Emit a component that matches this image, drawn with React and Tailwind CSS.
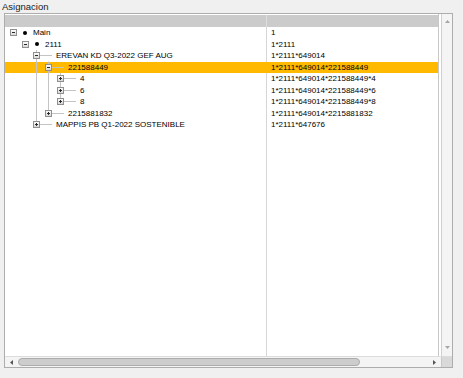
import React from 'react';

const rows = [
  { t: 'Main', lvl: 0, open: true, bullet: true, v: '1' },
  { t: '2111', lvl: 1, open: true, bullet: true, v: '1*2111' },
  { t: 'EREVAN KD Q3-2022 GEF AUG', lvl: 2, open: true, v: '1*2111*649014' },
  { t: '221588449', lvl: 3, open: true, v: '1*2111*649014*221588449', sel: true },
  { t: '4', lvl: 4, open: false, v: '1*2111*649014*221588449*4' },
  { t: '6', lvl: 4, open: false, v: '1*2111*649014*221588449*6' },
  { t: '8', lvl: 4, open: false, v: '1*2111*649014*221588449*8' },
  { t: '2215881832', lvl: 3, open: false, v: '1*2111*649014*2215881832' },
  { t: 'MAPPIS PB Q1-2022 SOSTENIBLE', lvl: 2, open: false, v: '1*2111*647676' },
];

const pad = ['pl-[5px]', 'pl-[17px]', 'pl-[28px]', 'pl-[40px]', 'pl-[52px]'];

function Expander({ open }) {
  return (
    <svg width="7" height="7" viewBox="0 0 7 7" className="relative z-10 shrink-0">
      <defs>
        <linearGradient id="eg" x1="0" y1="0" x2="0" y2="1">
          <stop offset="0" stopColor="#ffffff" />
          <stop offset="1" stopColor="#d6d6d6" />
        </linearGradient>
      </defs>
      <rect x="0.5" y="0.5" width="6" height="6" fill="url(#eg)" stroke="#8f8f8f" strokeWidth="1" />
      <line x1="2" y1="3.5" x2="5" y2="3.5" stroke="#2a2a2a" strokeWidth="1" />
      {!open && <line x1="3.5" y1="2" x2="3.5" y2="5" stroke="#2a2a2a" strokeWidth="1" />}
    </svg>
  );
}

export default function App() {
  return (
    <div
      className="w-[463px] h-[378px] bg-[#f0f0f0] flex flex-col text-black"
      style={{ fontFamily: '"Liberation Sans", Arial, sans-serif' }}
    >
      <div className="h-[13px] pl-[2px] text-[9.5px] leading-[13px] text-[#1a1a1a]">Asignacion</div>
      <div className="ml-[4px] w-[449px] h-[355px] border border-[#adadad] bg-white flex flex-col">
        <div className="flex flex-1 min-h-0">
          <div className="w-[433px] flex flex-col">
            <div className="mt-[1px] h-[12px] bg-[#cbcbcb] flex">
              <div className="w-[262px] border-r border-[#dedede]" />
              <div className="flex-1" />
            </div>
            <div className="relative flex-1 flex flex-col text-[8px] leading-[11.5px]">
              <svg className="absolute top-0 left-0" width="262" height="110">
                <line x1="31.5" y1="23" x2="31.5" y2="98" stroke="#c4c4c4" strokeWidth="1" />
                <line x1="43.5" y1="34.5" x2="43.5" y2="86.5" stroke="#c4c4c4" strokeWidth="1" />
                <line x1="55.5" y1="46" x2="55.5" y2="75" stroke="#c4c4c4" strokeWidth="1" />
              </svg>
              {rows.map((r, i) => (
                <div key={i} className={`flex h-[11.5px] ${r.sel ? 'bg-[#ffba00]' : ''}`}>
                  <div
                    className={`w-[262px] shrink-0 flex items-center border-r ${r.sel ? 'border-transparent' : 'border-[#d6d6d6]'} ${pad[r.lvl]}`}
                  >
                    <Expander open={r.open} />
                    <div className="w-[16px] h-full flex items-center shrink-0">
                      {r.bullet ? (
                        <div className="ml-[6px] w-[4px] h-[4px] rounded-full bg-black" />
                      ) : (
                        <div className="w-[12px] h-px bg-[#c4c4c4]" />
                      )}
                    </div>
                    <span className="whitespace-nowrap">{r.t}</span>
                  </div>
                  <div className="flex-1 pl-[4px] whitespace-nowrap">{r.v}</div>
                </div>
              ))}
              <div className="flex-1 flex">
                <div className="w-[262px] border-r border-[#d6d6d6]" />
                <div className="flex-1" />
              </div>
            </div>
          </div>
          <div className="w-px bg-[#c8c8c8]" />
          <div className="w-[2px] bg-white" />
          <div className="w-[11px] bg-[#f4f4f4] border-l border-[#d0d0d0] flex flex-col items-center justify-between pt-[6px] pb-[7px]">
            <svg width="5" height="3" viewBox="0 0 5 3">
              <polygon points="0,3 5,3 2.5,0" fill="#a6a6a6" />
            </svg>
            <svg width="5" height="3" viewBox="0 0 5 3">
              <polygon points="0,0 5,0 2.5,3" fill="#a6a6a6" />
            </svg>
          </div>
        </div>
        <div className="h-[11px] flex border-t border-[#dcdcdc]">
          <div className="w-[436px] bg-[#f4f4f4] flex items-center">
            <div className="w-[12px] flex justify-center">
              <svg width="3" height="5" viewBox="0 0 3 5">
                <polygon points="3,0 3,5 0,2.5" fill="#555555" />
              </svg>
            </div>
            <div className="ml-[1px] w-[342px] h-[8px] rounded-[4px] bg-[#cdcdcd] border border-[#acacac]" />
            <div className="flex-1" />
            <div className="w-[14px] flex justify-center">
              <svg width="3" height="5" viewBox="0 0 3 5">
                <polygon points="0,0 0,5 3,2.5" fill="#555555" />
              </svg>
            </div>
          </div>
          <div className="w-[11px] bg-[#d9d9d9] border-l border-[#c8c8c8]" />
        </div>
      </div>
    </div>
  );
}
